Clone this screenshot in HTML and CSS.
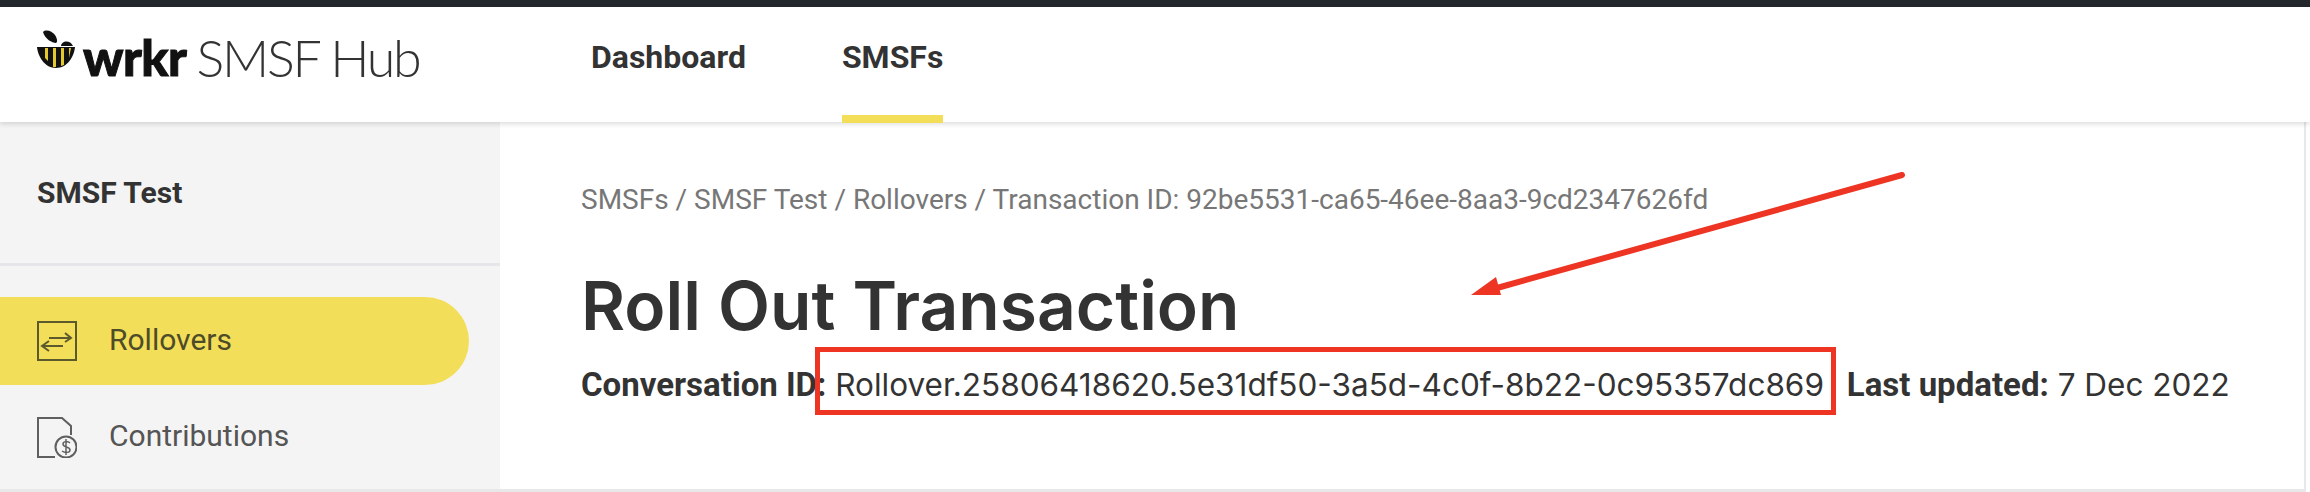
FILE: index.html
```html
<!DOCTYPE html>
<html lang="en">
<head>
    <meta charset="UTF-8">
    <title>Roll Out Transaction</title>
    <link rel="stylesheet" href="styles.css">
</head>
<body>
    <div class="topbar"></div>
    <header class="header">
        <a class="logo" href="#">
            <svg class="logo-bee" width="38" height="38" viewBox="0 0 38 38">
                <path d="M6 2 C9 -1 15 1 18 5 C20 8 21 12 19 13 C15 13 8 9 6 2Z" fill="#111"/>
                <path d="M0 17 H38 C37 27 30 38 19 38 C8 38 1 27 0 17Z" fill="#111"/>
                <path d="M24 16 C24 11 33 9 36 16Z" fill="#111"/>
                <path d="M8 18 H11 V31 L8 28Z M16 18 H19 V37 H16Z M24 18 H27 V35 L24 36Z M32 18 H34 L32 28Z" fill="#e6c92f"/>
            </svg>
            <span class="logo-word">wrkr</span>
            <span class="logo-name">SMSF Hub</span>
        </a>
        <nav class="main-nav">
            <a href="#">Dashboard</a>
            <a href="#" class="active">SMSFs</a>
        </nav>
    </header>

    <div class="layout">
        <aside class="sidebar">
            <div class="sidebar-title">SMSF Test</div>
            <ul class="side-menu">
                <li class="active">
                    <svg width="40" height="40" viewBox="0 0 40 40" fill="none" stroke="#5c5a2c" stroke-width="2">
                        <rect x="1" y="1" width="38" height="38"/>
                        <path d="M12 17 H34 M28 12 L34 17 L28 21"/>
                        <path d="M6 25 H26 M12 20 L5 25 L12 30"/>
                    </svg>
                    <span>Rollovers</span>
                </li>
                <li>
                    <svg width="40" height="41" viewBox="0 0 40 41" fill="none" stroke="#5f5f5f" stroke-width="2">
                        <path d="M18 40 H1 V1 H25 L34 9 V18"/>
                        <circle cx="29" cy="30" r="10.5"/>
                        <path d="M33 26 C31 24 26 24 26 27 C26 31 33 29 33 33 C33 36 28 36 25 34 M29 22 V38" stroke-width="1.5"/>
                    </svg>
                    <span>Contributions</span>
                </li>
            </ul>
        </aside>

        <main class="content">
            <div class="breadcrumb">SMSFs / SMSF Test / Rollovers / Transaction ID: 92be5531-ca65-46ee-8aa3-9cd2347626fd</div>
            <h1>Roll Out Transaction</h1>
            <p class="meta">
                <b>Conversation ID:</b> Rollover.25806418620.5e31df50-3a5d-4c0f-8b22-0c95357dc869 <b class="updated">Last updated:</b> 7 Dec 2022
            </p>
        </main>
    </div>

    <!-- red markup drawn over the screenshot -->
    <div class="markup-box"></div>
    <svg class="markup-arrow" width="450" height="130" viewBox="0 0 450 130">
        <path d="M431 5 L26 118" fill="none" stroke="#ee3524" stroke-width="6" stroke-linecap="round"/>
        <path d="M0 125 L25 107 L30 125Z" fill="#ee3524"/>
    </svg>
</body>
</html>
```

FILE: styles.css
```css
html, body {
    height: 492px;
    overflow: hidden;
}

body {
    margin: 0;
    padding-right: 4px;
    background-color: #fff;
    color: #333;
    font-family: 'Roboto', sans-serif;
    position: relative;
}

.topbar {
    height: 7px;
    margin-right: -4px;
    background-color: #24282d;
}

.header {
    height: 115px;
    display: flex;
    align-items: flex-start;
    position: relative;
    z-index: 2;
    background-color: #fff;
    box-shadow: 0 2px 5px rgba(0, 0, 0, 0.14);
    margin-right: -4px;
}

.logo {
    width: 591px;
    padding: 23px 0 0 37px;
    box-sizing: border-box;
    display: flex;
    align-items: flex-start;
    color: #111;
    text-decoration: none;
}

.logo-bee {
    flex: none;
}

.logo-word {
    margin: 2px 0 0 8px;
    font-family: 'Lato', sans-serif;
    font-weight: 900;
    font-size: 50px;
    line-height: 50px;
    letter-spacing: -0.5px;
    -webkit-text-stroke: 1px #111;
}

.logo-name {
    margin: 2px 0 0 10px;
    font-family: 'Lato', sans-serif;
    font-weight: 300;
    font-size: 52px;
    line-height: 50px;
    letter-spacing: -2.3px;
    color: #333;
}

.main-nav {
    display: flex;
    gap: 96px;
    height: 115px;
}

.main-nav a {
    color: #333;
    font-weight: 700;
    font-size: 32px;
    line-height: 100px;
    text-decoration: none;
    box-sizing: border-box;
    height: 116px;
}

.main-nav a.active {
    border-bottom: 8px solid #f3de5a;
}

.layout {
    display: flex;
    height: 367px;
    border-bottom: 3px solid #e8e8e8;
    border-right: 2px solid #e8e8e8;
}

.sidebar {
    width: 500px;
    flex: none;
    background-color: #f4f4f4;
}

.sidebar-title {
    height: 144px;
    box-sizing: border-box;
    padding: 55px 0 0 37px;
    border-bottom: 3px solid #e6e6ea;
    font-weight: 700;
    font-size: 30px;
    line-height: 32px;
}

.side-menu {
    list-style: none;
    margin: 31px 0 0;
    padding: 0;
}

.side-menu li {
    width: 469px;
    height: 88px;
    box-sizing: border-box;
    padding-left: 37px;
    display: flex;
    align-items: center;
    gap: 32px;
    font-size: 30px;
    line-height: 34px;
    color: #555;
    margin-bottom: 8px;
}

.side-menu li span {
    margin-top: -2px;
}

.side-menu li.active {
    background-color: #f3de5a;
    border-radius: 0 44px 44px 0;
    color: #4e4c28;
}

.side-menu svg {
    flex: none;
}

.content {
    flex: 1;
    padding: 62px 0 0 81px;
}

.breadcrumb {
    font-size: 28px;
    line-height: 32px;
    color: #777;
}

h1 {
    margin: 49px 0 0;
    font-family: 'Inter', sans-serif;
    font-weight: 600;
    font-size: 67.7px;
    line-height: 80px;
    color: #333;
}

.meta {
    margin: 23px 0 0;
    font-family: 'Inter', sans-serif;
    font-size: 31.5px;
    line-height: 34px;
    color: #333;
    white-space: nowrap;
}

.meta b {
    font-family: 'Roboto', sans-serif;
    font-weight: 700;
    font-size: 33px;
}

.meta .updated {
    margin-left: 14px;
}

.markup-box {
    position: absolute;
    left: 815px;
    top: 347px;
    width: 1021px;
    height: 68px;
    box-sizing: border-box;
    border: 5px solid #ee3524;
}

.markup-arrow {
    position: absolute;
    left: 1471px;
    top: 170px;
}
```
